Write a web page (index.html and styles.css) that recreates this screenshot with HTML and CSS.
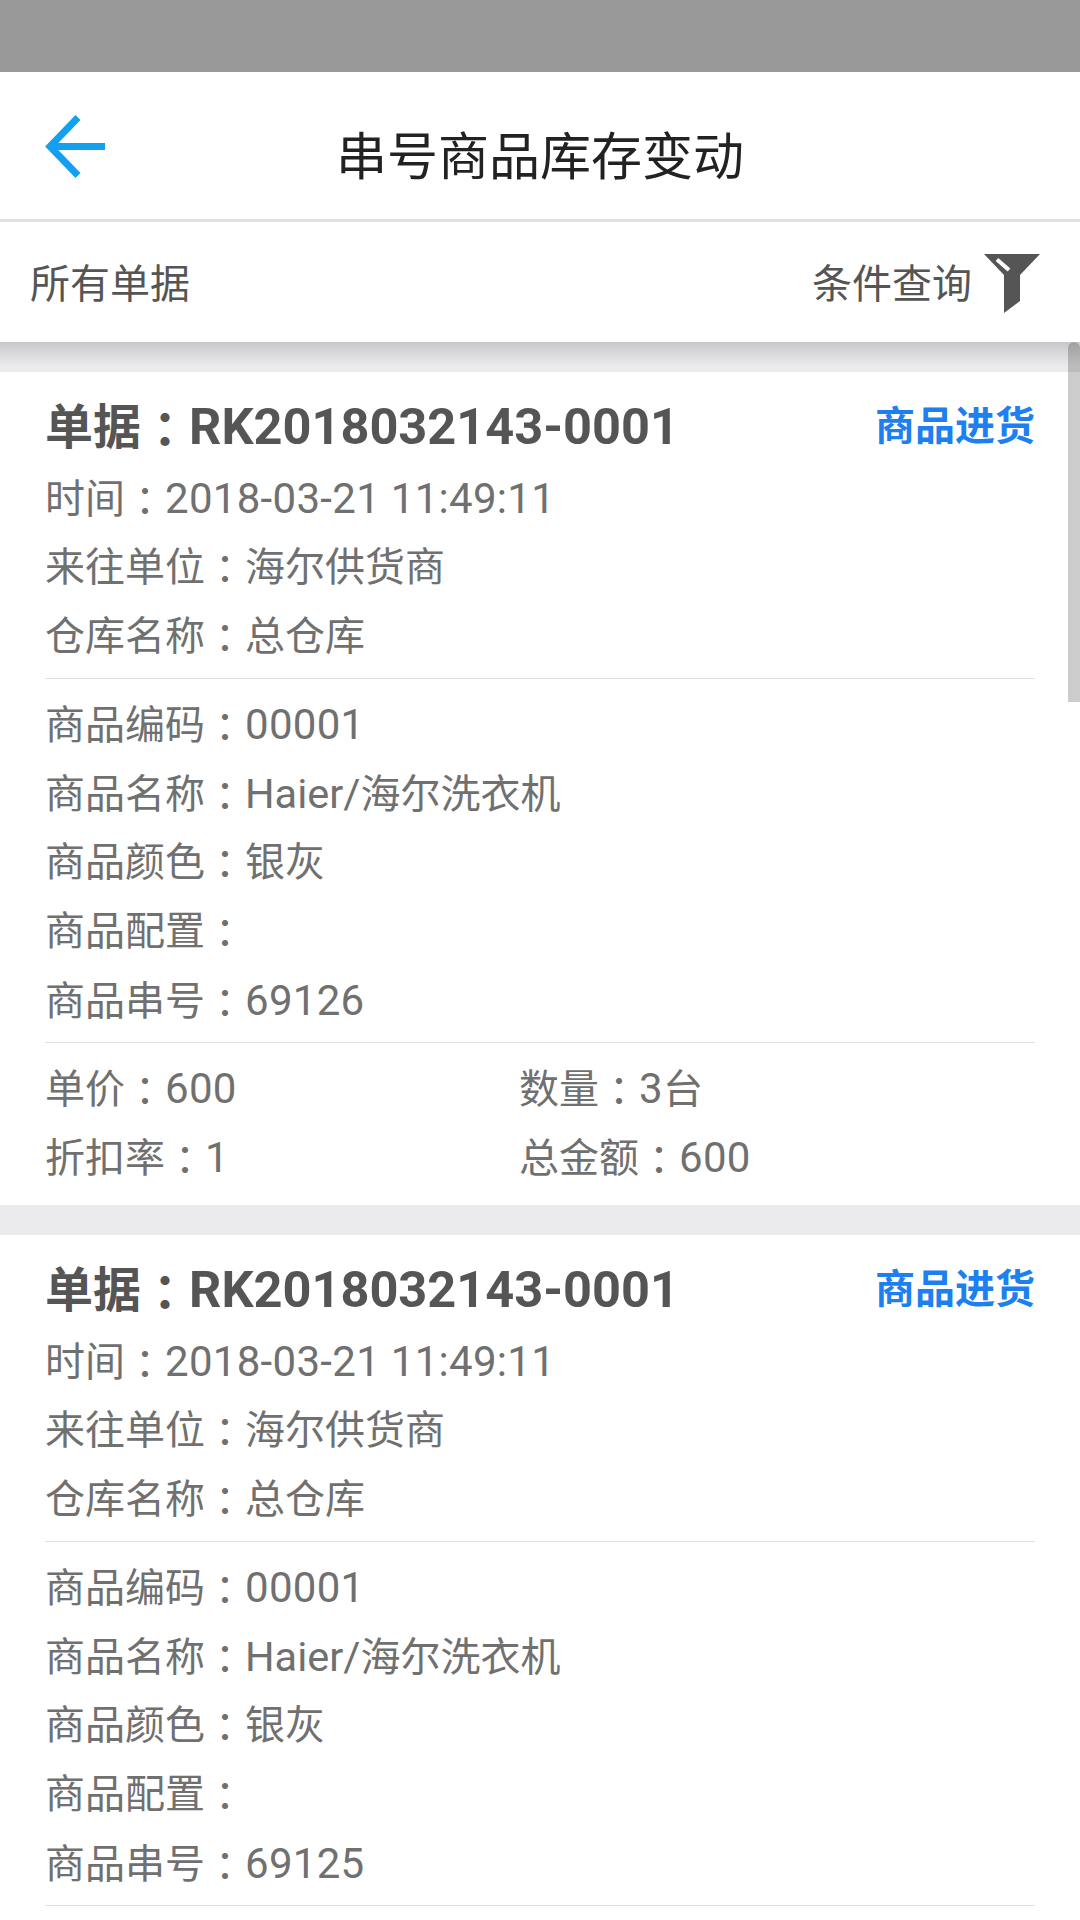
FILE: index.html
```html
<!DOCTYPE html>
<html lang="zh-CN">
<head>
    <meta charset="UTF-8">
    <meta name="viewport" content="width=device-width, initial-scale=1.0">
    <title>串号商品库存变动</title>
    <link rel="stylesheet" href="styles.css">
</head>
<body>
    <div class="status-bar"></div>

    <div class="header">
        <svg class="back" width="66" height="66" viewBox="40 113 66 66">
            <path d="M75 117.500L47 146.500L75 175.500M47 146.500H102" fill="none" stroke="#14a0f0" stroke-width="7"/>
        </svg>
        <h1>串号商品库存变动</h1>
    </div>

    <div class="filter-bar">
        <span>所有单据</span>
        <div class="filter">
            <span>条件查询</span>
            <svg class="filter-icon" width="56" height="59" viewBox="0 0 56 59">
                <path d="M0 0H56L36 21V47L20 59V21Z" fill="#555"/>
                <path d="M13 5.500L25 16" stroke="#fff" stroke-width="4"/>
            </svg>
        </div>
    </div>

    <div class="list">
        <div class="scrollbar"></div>

        <div class="card">
            <div class="card-title">
                <span class="doc-no">单据<span class="colon" lang="zh-TW">：</span><span class="num">RK2018032143-0001</span></span>
                <span class="doc-type">商品进货</span>
            </div>
            <div class="section first">
                <div class="row">时间<span class="colon" lang="zh-TW">：</span><span class="num">2018-03-21 11:49:11</span></div>
                <div class="row">来往单位<span class="colon" lang="zh-TW">：</span>海尔供货商</div>
                <div class="row">仓库名称<span class="colon" lang="zh-TW">：</span>总仓库</div>
            </div>
            <div class="section">
                <div class="row">商品编码<span class="colon" lang="zh-TW">：</span><span class="num">00001</span></div>
                <div class="row">商品名称<span class="colon" lang="zh-TW">：</span><span class="word">Haier/</span>海尔洗衣机</div>
                <div class="row">商品颜色<span class="colon" lang="zh-TW">：</span>银灰</div>
                <div class="row">商品配置<span class="colon" lang="zh-TW">：</span></div>
                <div class="row">商品串号<span class="colon" lang="zh-TW">：</span><span class="num">69126</span></div>
            </div>
            <div class="section totals">
                <div class="row">单价<span class="colon" lang="zh-TW">：</span><span class="num">600</span></div>
                <div class="row">数量<span class="colon" lang="zh-TW">：</span><span class="num">3</span>台</div>
                <div class="row">折扣率<span class="colon" lang="zh-TW">：</span><span class="num">1</span></div>
                <div class="row">总金额<span class="colon" lang="zh-TW">：</span><span class="num">600</span></div>
            </div>
        </div>

        <div class="card">
            <div class="card-title">
                <span class="doc-no">单据<span class="colon" lang="zh-TW">：</span><span class="num">RK2018032143-0001</span></span>
                <span class="doc-type">商品进货</span>
            </div>
            <div class="section first">
                <div class="row">时间<span class="colon" lang="zh-TW">：</span><span class="num">2018-03-21 11:49:11</span></div>
                <div class="row">来往单位<span class="colon" lang="zh-TW">：</span>海尔供货商</div>
                <div class="row">仓库名称<span class="colon" lang="zh-TW">：</span>总仓库</div>
            </div>
            <div class="section">
                <div class="row">商品编码<span class="colon" lang="zh-TW">：</span><span class="num">00001</span></div>
                <div class="row">商品名称<span class="colon" lang="zh-TW">：</span><span class="word">Haier/</span>海尔洗衣机</div>
                <div class="row">商品颜色<span class="colon" lang="zh-TW">：</span>银灰</div>
                <div class="row">商品配置<span class="colon" lang="zh-TW">：</span></div>
                <div class="row">商品串号<span class="colon" lang="zh-TW">：</span><span class="num">69125</span></div>
            </div>
            <div class="section totals"></div>
        </div>
    </div>
</body>
</html>
```

FILE: styles.css
```css
html, body {
    margin: 0;
    height: 1920px;
    overflow: hidden;
}
body {
    font-family: Roboto, "Noto Sans CJK SC", sans-serif;
    background: #ebebed;
    color: #707070;
}
.status-bar {
    height: 72px;
    background: #999;
}
.header {
    height: 147px;
    background: #fff;
    border-bottom: 3px solid #e0e0e0;
    display: grid;
    grid-template-columns: 1fr auto 1fr;
    align-items: center;
}
.back {
    margin-left: 43px;
}
h1 {
    margin: 0;
    padding-top: 24px;
    font-size: 51px;
    font-weight: 400;
    line-height: 60px;
    color: #222;
}
.filter-bar {
    height: 118px;
    background: #fff;
    padding: 0 40px 2px 30px;
    display: flex;
    justify-content: space-between;
    align-items: center;
    font-size: 40px;
    color: #555;
}
.filter {
    display: flex;
    align-items: center;
    gap: 12px;
}
.filter-icon {
    margin-top: 4px;
}
.list {
    position: relative;
    padding-top: 30px;
    background: linear-gradient(#c8c8ca, #ebebed 24px) no-repeat;
    background-size: 100% 30px;
}
.scrollbar {
    position: absolute;
    top: 0;
    right: 0;
    width: 12px;
    height: 360px;
    border-radius: 6px 6px 0 0;
    background: rgba(0, 0, 0, 0.2);
}
.card {
    background: #fff;
    margin-bottom: 30px;
    padding: 0 45px;
}
.card-title {
    height: 92px;
    padding: 12px 0 2px;
    box-sizing: border-box;
    display: flex;
    justify-content: space-between;
    align-items: center;
    font-weight: 700;
}
.doc-no {
    font-size: 48px;
    color: #555;
}
.doc-no .num {
    font-size: 50.5px;
    letter-spacing: 0;
}
.doc-type {
    font-size: 40px;
    color: #1e7ff0;
}
.colon {
    font-family: "Noto Sans CJK TC", sans-serif;
    line-height: 0;
    vertical-align: -3px;
}
.num {
    font-size: 42px;
    letter-spacing: 0.3px;
}
.word {
    font-size: 41.5px;
}
.section {
    border-top: 1px solid #e0e0e0;
    padding: 11px 0 7px;
}
.section.first {
    border-top: 0;
    padding: 0 0 7px;
}
.section.totals {
    display: grid;
    grid-template-columns: 474px 1fr;
    padding-bottom: 13px;
}
.row {
    height: 69px;
    line-height: 69px;
    font-size: 40px;
    white-space: nowrap;
}
```
